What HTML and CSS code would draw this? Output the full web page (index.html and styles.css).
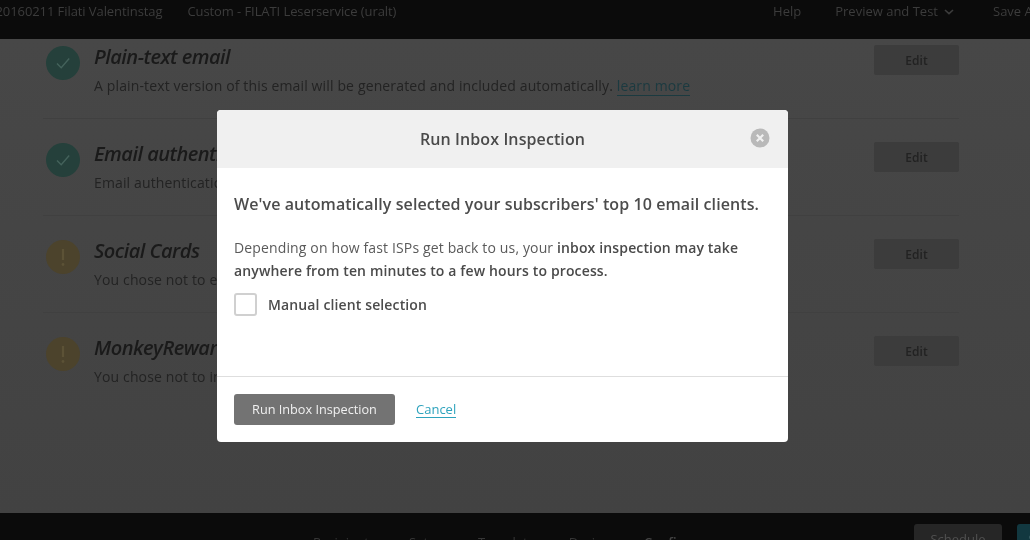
FILE: index.html
```html
<!DOCTYPE html>
<html lang="en">
<head>
<meta charset="utf-8">
<title>Run Inbox Inspection</title>
<link rel="stylesheet" href="styles.css">
</head>
<body>
<div class="page">
  <header class="topbar">
    <div class="crumbs"><span>20160211 Filati Valentinstag</span><span>Custom - FILATI Leserservice (uralt)</span></div>
    <nav class="topnav">
      <span>Help</span>
      <span class="preview">Preview and Test
        <svg class="chev" width="10" height="6" viewBox="0 0 10 6"><path d="M1 1l4 3.6L9 1" fill="none" stroke="#3c3c3c" stroke-width="1.6"/></svg>
      </span>
      <span>Save And Exit</span>
    </nav>
  </header>
  <main class="checklist">
    <section class="row">
      <svg class="status" viewBox="0 0 34 34"><circle cx="17" cy="17" r="17" fill="#25403b"/><path d="M11 17.5l4.2 4.2 8-9.2" fill="none" stroke="#44625b" stroke-width="1.4"/></svg>
      <div class="copy"><h2>Plain-text email</h2><p>A plain-text version of this email will be generated and included automatically. <a class="learn">learn more</a></p></div>
      <span class="edit">Edit</span>
    </section>
    <section class="row">
      <svg class="status" viewBox="0 0 34 34"><circle cx="17" cy="17" r="17" fill="#25403b"/><path d="M11 17.5l4.2 4.2 8-9.2" fill="none" stroke="#44625b" stroke-width="1.4"/></svg>
      <div class="copy"><h2>Email authentication</h2><p>Email authentication is enabled for this campaign.</p></div>
      <span class="edit">Edit</span>
    </section>
    <section class="row">
      <svg class="status" viewBox="0 0 34 34"><circle cx="17" cy="17" r="17" fill="#4c432c"/><path d="M17 9v11" stroke="#5c5236" stroke-width="2.2"/><circle cx="17" cy="24.5" r="1.4" fill="#5c5236"/></svg>
      <div class="copy"><h2>Social Cards</h2><p>You chose not to enable Social Cards.</p></div>
      <span class="edit">Edit</span>
    </section>
    <section class="row">
      <svg class="status" viewBox="0 0 34 34"><circle cx="17" cy="17" r="17" fill="#4c432c"/><path d="M17 9v11" stroke="#5c5236" stroke-width="2.2"/><circle cx="17" cy="24.5" r="1.4" fill="#5c5236"/></svg>
      <div class="copy"><h2>MonkeyRewards</h2><p>You chose not to include the MonkeyRewards badge.</p></div>
      <span class="edit">Edit</span>
    </section>
  </main>
  <footer class="bottombar">
    <ol class="steps">
      <li>Recipients</li><li class="sep">›</li><li>Setup</li><li class="sep">›</li><li>Template</li><li class="sep">›</li><li>Design</li><li class="sep">›</li><li class="current">Confirm</li>
    </ol>
    <div class="actions"><span class="schedule">Schedule</span><span class="send">Send</span></div>
  </footer>
</div>
<div class="modal" role="dialog">
  <div class="modal-head">
    <h1>Run Inbox Inspection</h1>
    <svg class="close" viewBox="0 0 20 20"><circle cx="10" cy="10" r="9.5" fill="#b9b9b9"/><path d="M6.8 6.8l6.4 6.4M13.2 6.8l-6.4 6.4" stroke="#f0f0f0" stroke-width="2.2"/></svg>
  </div>
  <div class="modal-body">
    <h3>We've automatically selected your subscribers' top 10 email clients.</h3>
    <p>Depending on how fast ISPs get back to us, your <strong>inbox inspection may take anywhere from ten minutes to a few hours to process.</strong></p>
    <label class="check"><span class="box"></span>Manual client selection</label>
  </div>
  <div class="modal-foot">
    <span class="run">Run Inbox Inspection</span>
    <a class="cancel">Cancel</a>
  </div>
</div>
</body>
</html>
```
FILE: styles.css
```css
* { box-sizing: border-box; }
html, body { margin: 0; height: 100%; overflow: hidden; }
body { font-family: "Open Sans", "Noto Sans", sans-serif; background: #444; color: #1c1c1c; }
.page { height: 540px; display: flex; flex-direction: column; filter: blur(0.5px); }

.topbar { height: 39px; flex: none; background: #0b0b0b; color: #3c3c3c; font-size: 13px; display: flex; justify-content: space-between; padding-top: 3px; white-space: nowrap; overflow: hidden; }
.crumbs { display: flex; gap: 25px; margin-left: -4.5px; letter-spacing: -0.08px; }
.topnav { display: flex; gap: 34px; margin-right: -44px; }
.preview { display: flex; align-items: flex-start; gap: 6px; }
.chev { margin: 6px 5px 0 0; }
.crumbs span, .topnav > span { line-height: 16px; }

.checklist { flex: 1; background: linear-gradient(#474747, #424242); padding: 0 70px 0 43px; overflow: hidden; }
.row { height: 97px; width: 916px; display: flex; align-items: flex-start; border-bottom: 1px solid #404040; padding: 23px 0 0 3px; }
.row:first-child { height: 80px; padding-top: 6px; }
.row:last-child { border-bottom: 0; }
.status { width: 34px; height: 34px; flex: none; margin-top: 1px; }
.copy { flex: 1; margin-left: 14px; min-width: 0; }
.copy h2 { margin: 0; font-size: 20px; line-height: 24px; font-style: italic; font-weight: 600; color: #1a1a1a; letter-spacing: -0.5px; white-space: nowrap; }
.copy p { margin: 6px 0 0; font-size: 14px; line-height: 22px; color: #232323; letter-spacing: 0.14px; white-space: nowrap; }
.learn { color: #1b3a40; border-bottom: 1px solid #1b3a40; }
.edit { width: 85px; height: 30px; flex: none; background: #3c3c3c; border-radius: 2px; font-size: 12px; font-weight: 600; line-height: 31px; text-align: center; color: #222; letter-spacing: 0.1px; }

.bottombar { height: 27px; flex: none; background: #0b0b0b; display: flex; justify-content: space-between; overflow: hidden; }
.steps { list-style: none; margin: 0; padding: 21px 0 0 313px; display: flex; gap: 15px; font-size: 13px; line-height: 17px; color: #363636; }
.steps .current { color: #444; font-weight: 600; }
.actions { display: flex; gap: 15px; padding-top: 11px; margin-right: -40px; }
.actions span { display: block; height: 30px; border-radius: 3px; font-size: 13px; line-height: 30px; text-align: center; }
.schedule { width: 88px; background: #262626; color: #505050; }
.send { width: 53px; background: #123840; color: #365a61; }

.modal { position: absolute; left: 217px; top: 110px; width: 571px; height: 332px; background: #fff; border-radius: 4px; overflow: hidden; display: flex; flex-direction: column; color: #4c4c4c; filter: blur(0.3px); }
.modal-head { height: 58px; flex: none; background: #f0f0f0; display: flex; align-items: center; justify-content: center; position: relative; }
.modal-head h1 { margin: 0; font-size: 16px; font-weight: 600; line-height: 58px; color: #4a4a4a; letter-spacing: 0.1px; }
.close { position: absolute; right: 18px; top: 18px; width: 20px; height: 20px; }
.modal-body { flex: 1; padding: 25px 17px 0; border-bottom: 1px solid #dedede; }
.modal-body h3 { margin: 0; font-size: 16px; font-weight: 600; line-height: 22px; color: #4c4c4c; white-space: nowrap; letter-spacing: 0.09px; }
.modal-body p { margin: 21px 0 0; font-size: 14px; line-height: 23px; color: #5a5a5a; letter-spacing: 0.14px; }
.modal-body strong { font-weight: 600; color: #4a4a4a; }
.check { display: flex; align-items: center; margin-top: 11px; font-size: 14px; font-weight: 600; line-height: 22px; color: #4c4c4c; letter-spacing: 0.13px; }
.box { width: 23px; height: 23px; border: 2px solid #d0d0d0; border-radius: 3px; margin-right: 11px; background: #fff; }
.modal-foot { height: 65px; flex: none; padding: 17px 17px 0; display: flex; align-items: flex-start; }
.run { width: 161px; height: 31px; background: #737373; border-radius: 3px; color: #f0f0f0; font-size: 12.7px; font-weight: 500; line-height: 31px; text-align: center; }
.cancel { margin: 7px 0 0 21px; font-size: 13px; font-weight: 500; line-height: 16px; color: #2ea3bd; border-bottom: 1px solid #2ea3bd; }
```
